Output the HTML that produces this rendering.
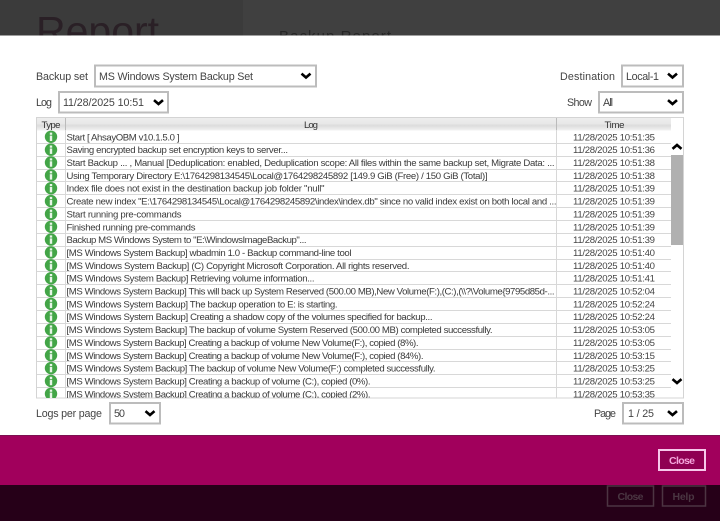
<!DOCTYPE html>
<html><head><meta charset="utf-8"><style>
html,body{margin:0;padding:0;background:#fff;width:720px;height:521px;overflow:hidden}
svg{display:block;filter:blur(.3px)}
text{font-family:"Liberation Sans",sans-serif;fill:#333;white-space:pre}
.l{font-size:10.7px;fill:#444}
.r{font-size:9.6px;fill:#3a3a3a}
.t{font-size:9.6px;fill:#444}
.h{font-size:9.6px;fill:#333}
.s{fill:#fff;stroke:#bcbcbc;stroke-width:2}
.c{fill:none;stroke:#000;stroke-width:2.6;stroke-linecap:square}
</style></head><body>
<svg width="720" height="521" viewBox="0 0 720 521" xmlns="http://www.w3.org/2000/svg">
<defs>
<linearGradient id="hd" x1="0" y1="0" x2="0" y2="1"><stop offset="0" stop-color="#ededed"/><stop offset=".45" stop-color="#e8e8e8"/><stop offset=".6" stop-color="#dcdcdc"/><stop offset="1" stop-color="#f2f2f2"/></linearGradient>
<clipPath id="tb"><rect x="36" y="130" width="648" height="268"/></clipPath>
<g id="i"><circle r="6.2" fill="#43a547"/><rect x="-1.2" y="-4.2" width="2.4" height="2.2" fill="#e8f5e8"/><rect x="-1.2" y="-1.2" width="2.4" height="5.4" fill="#e8f5e8"/></g>
</defs>
<rect width="720" height="521" fill="#404040"/>
<rect width="243" height="36" fill="#3b3b3b"/>
<text x="36" y="45" style="font-size:41px;fill:#2a2026">Report</text>
<text x="279" y="41" style="font-size:15px;fill:#262626" textLength="112" lengthAdjust="spacing">Backup Report</text>
<rect y="35.500" width="720" height="400" fill="#fff"/>

<text class="l" x="36" y="80" textLength="52" lengthAdjust="spacing">Backup set</text>
<rect class="s" x="95" y="65.500" width="221" height="21"/>
<text class="l" x="99" y="80" textLength="154" lengthAdjust="spacing">MS Windows System Backup Set</text>
<path class="c" d="M302.500 74.500l3.500 3 3.500-3"/>
<text class="l" x="36" y="106" textLength="16" lengthAdjust="spacing">Log</text>
<rect class="s" x="59" y="92" width="109" height="20.500"/>
<text class="l" x="63" y="106" textLength="81" lengthAdjust="spacing">11/28/2025 10:51</text>
<path class="c" d="M155 101l3.500 3 3.500-3"/>
<text class="l" x="560" y="80" textLength="55" lengthAdjust="spacing">Destination</text>
<rect class="s" x="622" y="65.500" width="61" height="21"/>
<text class="l" x="626" y="80" textLength="33" lengthAdjust="spacing">Local-1</text>
<path class="c" d="M669 74.500l3.500 3 3.500-3"/>
<text class="l" x="567" y="106" textLength="25" lengthAdjust="spacing">Show</text>
<rect class="s" x="599" y="92" width="84" height="20.500"/>
<text class="l" x="603" y="106" textLength="10" lengthAdjust="spacing">All</text>
<path class="c" d="M669 101l3.500 3 3.500-3"/>

<rect x="36.500" y="117.500" width="647" height="280.500" fill="#fff" stroke="#d4d4d4"/>
<rect x="37" y="118" width="634" height="12.500" fill="url(#hd)"/>
<path d="M65.500 118v12.500M556.500 118v12.500" stroke="#bbb"/>
<text class="h" x="41.500" y="128" textLength="19" lengthAdjust="spacing">Type</text>
<text class="h" x="304" y="128" textLength="14" lengthAdjust="spacing">Log</text>
<text class="h" x="604.500" y="128" textLength="20" lengthAdjust="spacing">Time</text>

<g clip-path="url(#tb)">
<path d="M65.500 130v268M556.500 130v268" stroke="#d8d8d8"/>
<path stroke="#d8d8d8" d="M37 143.500h634M37 156.500h634M37 169.500h634M37 181.500h634M37 194.500h634M37 207.500h634M37 220.500h634M37 233.500h634M37 246.500h634M37 259.500h634M37 271.500h634M37 284.500h634M37 297.500h634M37 310.500h634M37 323.500h634M37 336.500h634M37 349.500h634M37 361.500h634M37 374.500h634M37 387.500h634"/>
<use href="#i" x="51" y="136.800"/><use href="#i" x="51" y="149.700"/><use href="#i" x="51" y="162.500"/><use href="#i" x="51" y="175.400"/><use href="#i" x="51" y="188.200"/><use href="#i" x="51" y="201.100"/><use href="#i" x="51" y="213.900"/><use href="#i" x="51" y="226.800"/><use href="#i" x="51" y="239.600"/><use href="#i" x="51" y="252.500"/><use href="#i" x="51" y="265.300"/><use href="#i" x="51" y="278.200"/><use href="#i" x="51" y="291"/><use href="#i" x="51" y="303.900"/><use href="#i" x="51" y="316.700"/><use href="#i" x="51" y="329.600"/><use href="#i" x="51" y="342.400"/><use href="#i" x="51" y="355.300"/><use href="#i" x="51" y="368.100"/><use href="#i" x="51" y="381"/><use href="#i" x="51" y="393.800"/>
<text class="r" x="66.500" y="140.300" textLength="113" lengthAdjust="spacing">Start [ AhsayOBM v10.1.5.0 ]</text>
<text class="r" x="66.500" y="153.200" textLength="221.500" lengthAdjust="spacing">Saving encrypted backup set encryption keys to server...</text>
<text class="r" x="66.500" y="166" textLength="488" lengthAdjust="spacing">Start Backup ... , Manual [Deduplication: enabled, Deduplication scope: All files within the same backup set, Migrate Data: ...</text>
<text class="r" x="66.500" y="178.900" textLength="421" lengthAdjust="spacing">Using Temporary Directory E:\1764298134545\Local@1764298245892 [149.9 GiB (Free) / 150 GiB (Total)]</text>
<text class="r" x="66.500" y="191.700" textLength="258" lengthAdjust="spacing">Index file does not exist in the destination backup job folder "null"</text>
<text class="r" x="66.500" y="204.600" textLength="490" lengthAdjust="spacing">Create new index "E:\1764298134545\Local@1764298245892\index\index.db" since no valid index exist on both local and ...</text>
<text class="r" x="66.500" y="217.400" textLength="115" lengthAdjust="spacing">Start running pre-commands</text>
<text class="r" x="66.500" y="230.300" textLength="129" lengthAdjust="spacing">Finished running pre-commands</text>
<text class="r" x="66.500" y="243.100" textLength="240" lengthAdjust="spacing">Backup MS Windows System to "E:\WindowsImageBackup"...</text>
<text class="r" x="66.500" y="256" textLength="285" lengthAdjust="spacing">[MS Windows System Backup] wbadmin 1.0 - Backup command-line tool</text>
<text class="r" x="66.500" y="268.800" textLength="343" lengthAdjust="spacing">[MS Windows System Backup] (C) Copyright Microsoft Corporation. All rights reserved.</text>
<text class="r" x="66.500" y="281.700" textLength="248" lengthAdjust="spacing">[MS Windows System Backup] Retrieving volume information...</text>
<text class="r" x="66.500" y="294.500" textLength="488" lengthAdjust="spacing">[MS Windows System Backup] This will back up System Reserved (500.00 MB),New Volume(F:),(C:),(\\?\Volume{9795d85d-...</text>
<text class="r" x="66.500" y="307.400" textLength="271" lengthAdjust="spacing">[MS Windows System Backup] The backup operation to E: is starting.</text>
<text class="r" x="66.500" y="320.200" textLength="366" lengthAdjust="spacing">[MS Windows System Backup] Creating a shadow copy of the volumes specified for backup...</text>
<text class="r" x="66.500" y="333.100" textLength="426" lengthAdjust="spacing">[MS Windows System Backup] The backup of volume System Reserved (500.00 MB) completed successfully.</text>
<text class="r" x="66.500" y="345.900" textLength="352" lengthAdjust="spacing">[MS Windows System Backup] Creating a backup of volume New Volume(F:), copied (8%).</text>
<text class="r" x="66.500" y="358.800" textLength="357" lengthAdjust="spacing">[MS Windows System Backup] Creating a backup of volume New Volume(F:), copied (84%).</text>
<text class="r" x="66.500" y="371.600" textLength="369" lengthAdjust="spacing">[MS Windows System Backup] The backup of volume New Volume(F:) completed successfully.</text>
<text class="r" x="66.500" y="384.500" textLength="304" lengthAdjust="spacing">[MS Windows System Backup] Creating a backup of volume (C:), copied (0%).</text>
<text class="r" x="66.500" y="397.300" textLength="304" lengthAdjust="spacing">[MS Windows System Backup] Creating a backup of volume (C:), copied (2%).</text>
<text class="t" x="573" y="140.300" textLength="82" lengthAdjust="spacing">11/28/2025 10:51:35</text>
<text class="t" x="573" y="153.200" textLength="82" lengthAdjust="spacing">11/28/2025 10:51:36</text>
<text class="t" x="573" y="166" textLength="82" lengthAdjust="spacing">11/28/2025 10:51:38</text>
<text class="t" x="573" y="178.900" textLength="82" lengthAdjust="spacing">11/28/2025 10:51:38</text>
<text class="t" x="573" y="191.700" textLength="82" lengthAdjust="spacing">11/28/2025 10:51:39</text>
<text class="t" x="573" y="204.600" textLength="82" lengthAdjust="spacing">11/28/2025 10:51:39</text>
<text class="t" x="573" y="217.400" textLength="82" lengthAdjust="spacing">11/28/2025 10:51:39</text>
<text class="t" x="573" y="230.300" textLength="82" lengthAdjust="spacing">11/28/2025 10:51:39</text>
<text class="t" x="573" y="243.100" textLength="82" lengthAdjust="spacing">11/28/2025 10:51:39</text>
<text class="t" x="573" y="256" textLength="82" lengthAdjust="spacing">11/28/2025 10:51:40</text>
<text class="t" x="573" y="268.800" textLength="82" lengthAdjust="spacing">11/28/2025 10:51:40</text>
<text class="t" x="573" y="281.700" textLength="82" lengthAdjust="spacing">11/28/2025 10:51:41</text>
<text class="t" x="573" y="294.500" textLength="82" lengthAdjust="spacing">11/28/2025 10:52:04</text>
<text class="t" x="573" y="307.400" textLength="82" lengthAdjust="spacing">11/28/2025 10:52:24</text>
<text class="t" x="573" y="320.200" textLength="82" lengthAdjust="spacing">11/28/2025 10:52:24</text>
<text class="t" x="573" y="333.100" textLength="82" lengthAdjust="spacing">11/28/2025 10:53:05</text>
<text class="t" x="573" y="345.900" textLength="82" lengthAdjust="spacing">11/28/2025 10:53:05</text>
<text class="t" x="573" y="358.800" textLength="82" lengthAdjust="spacing">11/28/2025 10:53:15</text>
<text class="t" x="573" y="371.600" textLength="82" lengthAdjust="spacing">11/28/2025 10:53:25</text>
<text class="t" x="573" y="384.500" textLength="82" lengthAdjust="spacing">11/28/2025 10:53:25</text>
<text class="t" x="573" y="397.300" textLength="82" lengthAdjust="spacing">11/28/2025 10:53:35</text>
</g>
<rect x="671" y="155" width="12" height="90" fill="#b0b0b0"/>
<path class="c" d="M673.500 148l3.500-3 3.500 3"/>
<path class="c" d="M673.500 380l3.500 3 3.500-3"/>

<text class="l" x="36" y="417" textLength="66" lengthAdjust="spacing">Logs per page</text>
<rect class="s" x="110" y="403" width="50" height="20.500"/>
<text class="l" x="114" y="417" textLength="11" lengthAdjust="spacing">50</text>
<path class="c" d="M146.500 412l3.500 3 3.500-3"/>
<text class="l" x="594" y="417" textLength="22" lengthAdjust="spacing">Page</text>
<rect class="s" x="623" y="403" width="60" height="20.500"/>
<text class="l" x="628" y="417" textLength="26" lengthAdjust="spacing">1 / 25</text>
<path class="c" d="M669 412l3.500 3 3.500-3"/>

<rect y="435" width="720" height="50" fill="#a1005c"/>
<rect y="435" width="720" height="1" fill="#7c1050"/>
<rect y="485" width="720" height="36" fill="#260018"/>
<rect x="659" y="450" width="46" height="20" fill="#8f0052" stroke="#f6c8ea" stroke-width="2"/>
<text x="669" y="464" style="font-size:10.500px;font-weight:bold;fill:#f4a6dc" textLength="26" lengthAdjust="spacing">Close</text>
<rect x="607.500" y="486" width="46" height="20" fill="none" stroke="#4c3442" stroke-width="1.500"/>
<text x="617.500" y="500" style="font-size:10.500px;font-weight:bold;fill:#4a3642" textLength="26" lengthAdjust="spacing">Close</text>
<rect x="662.500" y="486" width="43" height="20" fill="none" stroke="#4c3442" stroke-width="1.500"/>
<text x="672.500" y="500" style="font-size:10.500px;font-weight:bold;fill:#4a3642" textLength="22" lengthAdjust="spacing">Help</text>
</svg>
</body></html>
